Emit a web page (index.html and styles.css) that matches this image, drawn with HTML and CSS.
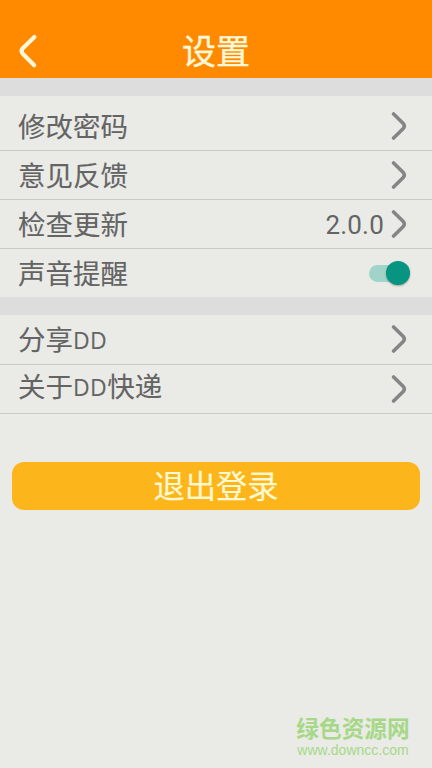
FILE: index.html
```html
<!DOCTYPE html>
<html lang="zh-CN">
<head>
<meta charset="utf-8">
<title>设置</title>
<link rel="stylesheet" href="styles.css">
</head>
<body>
<svg class="defs" width="0" height="0"><symbol id="chevron" viewBox="0 0 18 30"><path d="M3.6 3 L13 12.2 Q15.6 15 13 17.8 L3.6 27"/></symbol></svg>
<header class="header">
  <svg class="back" viewBox="0 0 24 36"><path d="M18.4 4 L6.8 15.2 Q4.4 18 6.8 20.8 L18.2 32.2"/></svg>
  <h1 class="title">设置</h1>
</header>
<main>
  <section class="group">
    <div class="row"><span class="label">修改密码</span><svg class="chevron"><use href="#chevron"/></svg></div>
    <div class="row"><span class="label">意见反馈</span><svg class="chevron"><use href="#chevron"/></svg></div>
    <div class="row"><span class="label">检查更新</span><span class="version">2.0.0</span><svg class="chevron"><use href="#chevron"/></svg></div>
    <div class="row row-toggle"><span class="label">声音提醒</span><span class="switch"><span class="knob"></span></span></div>
  </section>
  <section class="group">
    <div class="row"><span class="label">分享<span class="latin">DD</span></span><svg class="chevron"><use href="#chevron"/></svg></div>
    <div class="row"><span class="label label-high">关于<span class="latin">DD</span>快递</span><svg class="chevron"><use href="#chevron"/></svg></div>
  </section>
  <button class="logout">退出登录</button>
</main>
<footer class="mark"><div class="mark-name">绿色资源网</div><div class="mark-url">www.downcc.com</div></footer>
</body>
</html>
```
FILE: styles.css
```css
* { box-sizing: border-box; }
body {
  margin: 0;
  height: 768px;
  overflow: hidden;
  display: flex;
  flex-direction: column;
  background: #eaebe7;
  color: #646464;
  font-family: "Noto Sans CJK SC", sans-serif;
}
.defs { position: absolute; }
.header {
  height: 78px;
  padding: 24px 16px 0;
  display: grid;
  grid-template-columns: 20px 1fr 20px;
  align-items: center;
  background: #ff8a00;
}
.back { width: 24px; height: 36px; fill: none; stroke: #fff6dc; stroke-width: 4.2; stroke-linecap: round; }
.title { margin: 0; text-align: center; color: #fff8d8; font-size: 34px; line-height: 52px; padding-bottom: 2px; font-weight: 400; -webkit-text-stroke: 0.4px; }
.group { border-top: 18px solid #dddddd; }
.row {
  height: 49.2px;
  padding: 0 24px 0 18px;
  display: flex;
  align-items: center;
  border-bottom: 1.5px solid #c8c9c7;
}
.group:first-child .row:first-child { height: 55px; padding-top: 6px; }
.row-toggle { border-bottom: 0; height: 48px; }
.label { flex: 1; font-size: 27.5px; line-height: 46px; padding-bottom: 2px; white-space: nowrap; -webkit-text-stroke: 0.1px; }
.label-high { padding-bottom: 7px; }
.latin { font-family: "Open Sans", sans-serif; font-size: 23px; line-height: 1; letter-spacing: 0.4px; vertical-align: 1px; }
.version { font-family: Roboto, sans-serif; font-size: 26px; letter-spacing: 0.2px; margin-right: 6px; padding-top: 2px; }
.chevron { width: 18px; height: 30px; fill: none; stroke: #858585; stroke-width: 3.6; stroke-linecap: round; }
.switch { width: 41px; height: 17px; border-radius: 9px; background: #a1d4c9; display: flex; justify-content: flex-end; align-items: center; margin-right: -2px; }
.knob { width: 24px; height: 24px; border-radius: 50%; background: #079481; box-shadow: 0 1px 2px #0005; flex: none; }
.logout {
  display: block;
  width: 408px;
  height: 48px;
  margin: 48px 12px 0;
  padding: 0 0 1px;
  border: 0;
  border-radius: 12px;
  background: #fcb61c;
  color: #fff8d0;
  font: 400 31.3px/46px "Noto Sans CJK SC", sans-serif;
  -webkit-text-stroke: 0.2px;
}
.mark { width: 114px; margin: auto 22px 10px auto; color: #a7d888; text-align: center; white-space: nowrap; }
.mark-name { font-size: 22.7px; line-height: 26px; font-weight: 700; }
.mark-url { font-family: "Liberation Sans", sans-serif; font-size: 14px; line-height: 16px; padding-top: 1px; }
```
